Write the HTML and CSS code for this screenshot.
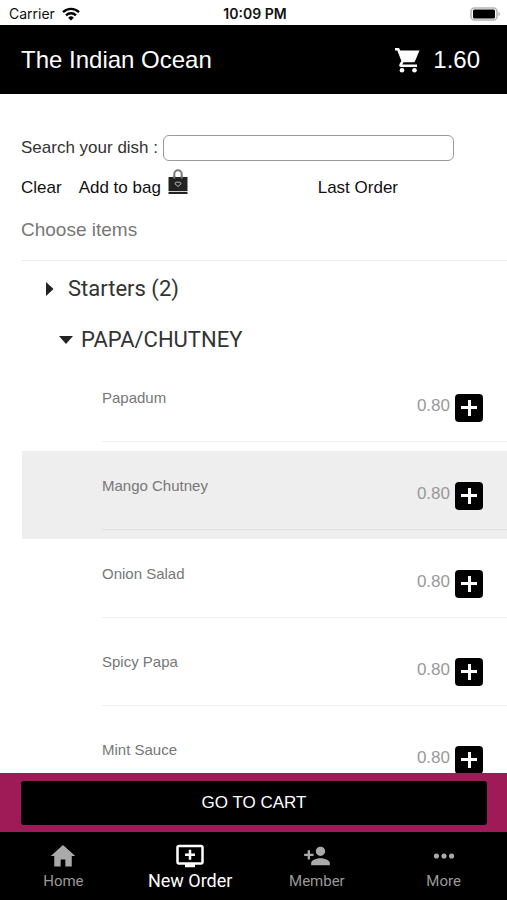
FILE: index.html
```html
<!DOCTYPE html>
<html lang="en">
<head>
<meta charset="utf-8">
<meta name="viewport" content="width=device-width, initial-scale=1">
<title>The Indian Ocean</title>
<link rel="stylesheet" href="styles.css">
</head>
<body>
<div class="status">
  <span class="carrier">Carrier
    <svg width="18" height="14" viewBox="0 0 18 14" aria-hidden="true"><g fill="none" stroke="#000" stroke-width="2.4"><path d="M1 5.2a11.4 11.4 0 0 1 16 0"/><path d="M4 8.3a7.2 7.2 0 0 1 10 0"/></g><path d="M9 13.6 6.2 10.7a4 4 0 0 1 5.6 0z"/></svg>
  </span>
  <span class="time">10:09 PM</span>
  <span class="battery"><svg width="31" height="14" viewBox="0 0 31 14" aria-hidden="true"><rect x="1" y="1" width="26" height="12" rx="3.5" fill="#fff" stroke="#b5b5b5" stroke-width="1.6"/><rect x="3" y="2.5" width="22" height="9" rx="1.5"/><path d="M28.5 5v4q1.5-.5 1.5-2t-1.5-2" fill="#aaa"/></svg></span>
</div>
<header class="header">
  <h1>The Indian Ocean</h1>
  <a class="cart" href="#cart">
    <svg width="26" height="26" viewBox="0 0 26 26" fill="#fff" aria-hidden="true"><path d="M1 1h4l1.300 2.500H25.500L21 14.200q-.5 1-1.600 1H9.500l-1.200 2.300H23V20H7.200q-3-.3-1.500-3.300l1.700-2.800L3.300 3.500H1z"/><circle cx="8" cy="23.200" r="2.300"/><circle cx="20.500" cy="23.200" r="2.300"/></svg>
    <span>1.60</span>
  </a>
</header>
<main class="content">
  <div class="search">
    <label for="dish">Search your dish :</label>
    <input id="dish" type="text">
  </div>
  <div class="actions">
    <button type="button">Clear</button>
    <button type="button" class="bag">Add to bag
      <svg width="20" height="26" viewBox="0 0 20 26" aria-hidden="true"><path d="M6.300 12V5a3.700 3.700 0 0 1 7.400 0v7" fill="none" stroke="#777" stroke-width="2"/><path d="M.5 8h19v14H.5z" fill="#222"/><path d="M.5 22.800h19V25H.5z" fill="#222"/><path d="M6.300 7v2.500M13.700 7v2.500" stroke="#777" stroke-width="2"/><path d="M10 17.500 7 14.800q0-1.600 1.500-1.600h3q1.500 0 1.500 1.600z" fill="none" stroke="#bbb"/></svg>
    </button>
    <button type="button" class="last">Last Order</button>
  </div>
  <h2 class="choose">Choose items</h2>
  <button type="button" class="group" aria-expanded="false"><svg width="10" height="16" viewBox="0 0 10 16" aria-hidden="true"><path d="M1 1v14l7.500-7z" fill="#222"/></svg>Starters (2)</button>
  <button type="button" class="group sub" aria-expanded="true"><svg width="14" height="8" viewBox="0 0 14 8" aria-hidden="true"><path d="M0 0h14L7 8z" fill="#222"/></svg>PAPA/CHUTNEY</button>
  <ul class="items">
    <li><div class="item"><span class="name">Papadum</span><span class="price">0.80</span><button type="button" class="add" aria-label="Add Papadum"></button></div></li>
    <li class="selected"><div class="item"><span class="name">Mango Chutney</span><span class="price">0.80</span><button type="button" class="add" aria-label="Add Mango Chutney"></button></div></li>
    <li><div class="item"><span class="name">Onion Salad</span><span class="price">0.80</span><button type="button" class="add" aria-label="Add Onion Salad"></button></div></li>
    <li><div class="item"><span class="name">Spicy Papa</span><span class="price">0.80</span><button type="button" class="add" aria-label="Add Spicy Papa"></button></div></li>
    <li><div class="item"><span class="name">Mint Sauce</span><span class="price">0.80</span><button type="button" class="add" aria-label="Add Mint Sauce"></button></div></li>
  </ul>
</main>
<div class="checkout"><button type="button">GO TO CART</button></div>
<nav class="tabs">
  <a href="#home"><svg width="28" height="28" viewBox="0 0 24 24" aria-hidden="true"><path d="M10 21v-6h4v6h5.500v-9h3L12 2.500 1.500 12h3v9z"/></svg><span>Home</span></a>
  <a href="#order" class="active"><svg width="30" height="28" viewBox="0 0 24 22" aria-hidden="true"><path d="M21 2H3c-1.100 0-2 .9-2 2v12c0 1.100.9 2 2 2h5v2h8v-2h5c1.100 0 2-.9 2-2V4c0-1.100-.9-2-2-2zm0 14H3V4h18v12zm-5-7v2h-3v3h-2v-3H8V9h3V6h2v3h3z"/></svg><span>New Order</span></a>
  <a href="#member"><svg width="28" height="28" viewBox="0 0 24 24" aria-hidden="true"><path d="M15 12c2.210 0 4-1.790 4-4s-1.790-4-4-4-4 1.790-4 4 1.790 4 4 4zm-9-2V7H4v3H1v2h3v3h2v-3h3v-2H6zm9 4c-2.670 0-8 1.340-8 4v2h16v-2c0-2.660-5.330-4-8-4z"/></svg><span>Member</span></a>
  <a href="#more"><svg width="28" height="28" viewBox="0 0 24 24" aria-hidden="true"><circle cx="5.500" cy="12" r="2.200"/><circle cx="12" cy="12" r="2.200"/><circle cx="18.500" cy="12" r="2.200"/></svg><span>More</span></a>
</nav>
</body>
</html>
```
FILE: styles.css
```css
* { box-sizing: border-box; }
body {
  margin: 0;
  height: 100vh;
  display: flex;
  flex-direction: column;
  background: #fff;
  color: #111;
  font: 16px/20px "Liberation Sans", sans-serif;
}
button {
  border: 0;
  padding: 0;
  background: none;
  color: inherit;
  font: inherit;
}
a { color: inherit; text-decoration: none; }
svg { display: block; }

.status {
  flex: none;
  display: grid;
  grid-template-columns: 1fr auto 1fr;
  align-items: center;
  height: 25px;
  padding: 2px 6px 0 9px;
  font-family: Inter, sans-serif;
  font-size: 14px;
}
.carrier { display: flex; align-items: center; gap: 7px; }
.time { font-weight: 600; }
.battery { justify-self: end; }

.header {
  flex: none;
  display: flex;
  align-items: center;
  justify-content: space-between;
  height: 69px;
  padding: 0 27px 0 21px;
  background: #000;
  color: #fff;
  font-size: 24px;
  line-height: 28px;
}
.header h1 { margin: 0; font-size: inherit; font-weight: 400; }
.cart { display: flex; align-items: center; gap: 13px; }

.content {
  flex: 1;
  min-height: 0;
  overflow: hidden;
  padding: 41px 0 0 21px;
}
.search {
  display: flex;
  align-items: center;
  gap: 5px;
  margin-right: 53px;
  color: #333;
}
.search label { font-size: 17px; }
.search input {
  flex: 1;
  min-width: 0;
  height: 26px;
  padding: 0 6px;
  border: 1px solid #999;
  border-radius: 6px;
  background: #fff;
  font: inherit;
}
.actions {
  display: flex;
  align-items: center;
  height: 54px;
  padding-right: 109px;
  font-size: 17px;
}
.bag { display: flex; align-items: center; gap: 7px; margin-left: 17px; }
.bag svg { margin-bottom: 12px; }
.last { margin-left: auto; }
.choose {
  margin: 0;
  height: 46px;
  padding-top: 5px;
  border-bottom: 1px solid #eee;
  color: #777;
  font-size: 19px;
  font-weight: 400;
  line-height: 20px;
}
.group {
  display: flex;
  align-items: center;
  gap: 13px;
  height: 51px;
  padding: 4px 0 0 24px;
  color: #333;
  font-family: Roboto, sans-serif;
  font-size: 22px;
}
.sub { gap: 8px; padding-left: 38px; }

.items { margin: 0; padding: 0; list-style: none; }
.items li { height: 88px; margin-left: 1px; padding-left: 80px; }
.items .selected { background: #eee; }
.item {
  display: flex;
  align-items: center;
  height: 79px;
  padding: 11px 24px 0 0;
  border-bottom: 1px solid #eee;
}
.selected .item { border-color: #e0e0e0; }
.name { flex: 1; margin-bottom: 20px; color: #777; font-size: 15px; }
.price { margin: 0 5px 4px 0; color: #999; font-size: 17px; }
.add {
  display: grid;
  place-items: center;
  width: 28px;
  height: 28px;
  border-radius: 4px;
  background: #000;
}
.add::before, .add::after {
  content: "";
  grid-area: 1 / 1;
  width: 16px;
  height: 3px;
  background: #fff;
}
.add::after { width: 3px; height: 16px; }

.checkout {
  flex: none;
  padding: 8px 20px 7px 21px;
  background: #9e1b58;
}
.checkout button {
  display: block;
  width: 100%;
  height: 44px;
  border-radius: 3px;
  background: #000;
  color: #fff;
  font-size: 17px;
}
.tabs {
  flex: none;
  display: grid;
  grid-template-columns: repeat(4, 1fr);
  height: 68px;
  background: #000;
  color: #999;
  font: 15px/20px Roboto, sans-serif;
}
.tabs a {
  display: flex;
  flex-direction: column;
  align-items: center;
  padding-top: 10px;
  gap: 1px;
}
.tabs svg { fill: #aaa; }
.tabs .active { color: #fff; font-size: 18px; }
.tabs .active svg { fill: #fff; }
```
